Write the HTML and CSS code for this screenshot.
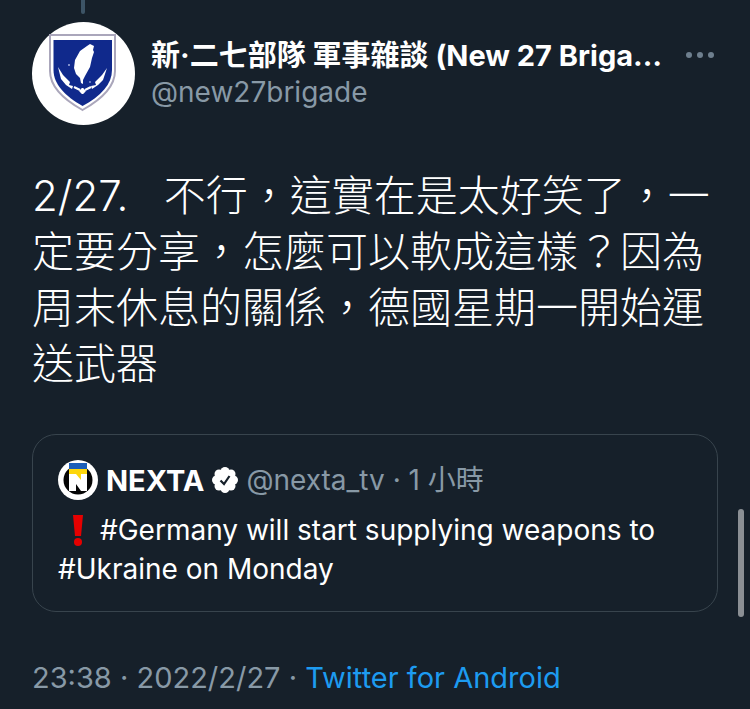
FILE: index.html
```html
<!DOCTYPE html>
<html lang="zh-Hant">
  <head>
    <meta charset="UTF-8" />
    <meta name="viewport" content="width=device-width, initial-scale=1.0" />
    <title>Tweet</title>

    <link rel="stylesheet" href="styles.css">
  </head>

  <body>
    <article class="tweet">
      <div class="thread-line"></div>

      <header class="tweet-header">
        <svg class="avatar" viewBox="0 0 103 103" role="img" aria-label="new27brigade">
          <circle cx="51.5" cy="51.5" r="51.5" fill="#fff" />
          <path d="M18 13H83V49C83 64 72 76 50.500 88C29 76 18 64 18 49Z" fill="#fff" stroke="#aaa6bb" stroke-width="2" />
          <path d="M21.500 18H80V48C80 62 69 74 50.500 84C33 74 21.500 62 21.500 48Z" fill="#10298c" />
          <path d="M55 24L58 22L62 24L61 28L62 30L60 36L58 45L53 54L51 58V62L49 61L48 56L44 52L42 46L43 38L48 29Z" fill="#fff" />
          <path d="M26 45L31 53L38 60L37 63L41 64L40 67L34 63L29 57ZM75 46L70 53L63 60L64 63L59 64L60 67L66 63L71 58Z" fill="#fff" />
          <path d="M42 65L48 68M59 65L53 68" stroke="#fff" stroke-width="2" />
          <circle cx="50.500" cy="69" r="2.500" fill="#fff" />
          <path d="M50.500 66V72M47.500 69H53.500" stroke="#fff" stroke-width="2" />
          <circle cx="37" cy="43" r="1" fill="#a5b1df" />
          <circle cx="58" cy="60" r="1" fill="#7f90ce" />
        </svg>

        <div class="author">
          <h1>新·二七部隊 軍事雜談 (New 27 Briga…</h1>
          <p>@new27brigade</p>
        </div>

        <button type="button" class="more" aria-label="更多">
          <svg viewBox="0 0 28 8">
            <circle cx="3" cy="4" r="3" />
            <circle cx="14" cy="4" r="3" />
            <circle cx="25" cy="4" r="3" />
          </svg>
        </button>
      </header>

      <p class="tweet-text">2/27.&nbsp;&nbsp; 不行，這實在是太好笑了，一定要分享，怎麼可以軟成這樣？因為周末休息的關係，德國星期一開始運送武器</p>

      <section class="quote">
        <div class="quote-header">
          <svg class="quote-avatar" viewBox="0 0 40 40" role="img" aria-label="NEXTA">
            <circle cx="20" cy="20" r="20" fill="#fff" />
            <circle cx="20" cy="20" r="14.500" fill="#050505" />
            <path d="M11 3H29V31H23L18 24V31H11Z" fill="#fff" />
            <path d="M11 3H29V9H11Z" fill="#1c5eb8" />
            <path d="M11 9H29V14H23V20L18 14H11Z" fill="#fdd60b" />
          </svg>
          <strong>NEXTA</strong>
          <svg class="verified" viewBox="0 0 26 26" role="img" aria-label="verified">
            <g fill="#fff">
              <circle cx="13" cy="13" r="10" />
              <circle cx="13" cy="4.500" r="4.500" />
              <circle cx="19" cy="7" r="4.500" />
              <circle cx="21.500" cy="13" r="4.500" />
              <circle cx="19" cy="19" r="4.500" />
              <circle cx="13" cy="21.500" r="4.500" />
              <circle cx="7" cy="19" r="4.500" />
              <circle cx="4.500" cy="13" r="4.500" />
              <circle cx="7" cy="7" r="4.500" />
            </g>
            <path d="M8.500 13.500L12 17L17.500 9" fill="none" stroke="#16202a" stroke-width="2.200" />
          </svg>
          <span class="quote-meta">@nexta_tv · 1 小時</span>
        </div>

        <p class="quote-text">
          <svg class="exclamation" viewBox="0 0 42 32" role="img" aria-label="!">
            <path d="M15 1H25L23 22H17Z" fill="#e60000" />
            <circle cx="20" cy="28" r="4" fill="#e60000" />
          </svg>#Germany will start supplying weapons to #Ukraine on Monday
        </p>
      </section>

      <footer class="tweet-footer">
        23:38 · 2022/2/27 · <a href="#">Twitter for Android</a>
      </footer>
    </article>

    <div class="scroll-thumb"></div>
  </body>
</html>
```

FILE: styles.css
```css
* {
  margin: 0;
  padding: 0;
  box-sizing: border-box;
}

body {
  background-color: #16202a;
  color: white;
  font-family: Inter, "Noto Sans CJK TC", sans-serif;
  font-size: 28px;
  overflow: hidden;
}

.tweet {
  padding: 0 32px;
}

.thread-line {
  width: 4px;
  height: 14px;
  margin-left: 49px;
  border-radius: 0 0 2px 2px;
  background-color: #3d5466;
}

.tweet-header {
  display: flex;
  gap: 16px;
  margin-top: 8px;
}

.avatar {
  flex: none;
  width: 103px;
  height: 103px;
}

.author {
  flex: 1;
  min-width: 0;
  padding-top: 16px;
}

.author h1 {
  font-size: 29px;
  line-height: 36px;
  white-space: nowrap;
}

.author p {
  color: #8899a6;
  line-height: 36px;
}

.more {
  align-self: flex-start;
  flex: none;
  margin: 29px 4px 0 0;
  border: none;
  background: none;
}

.more svg {
  display: block;
  width: 28px;
  height: 8px;
  fill: #6e7f8e;
}

.tweet-text {
  margin-top: 43px;
  font-size: 42px;
  font-weight: 300;
  line-height: 56px;
}

.quote {
  margin-top: 42px;
  padding: 25px 25px 22px;
  border: 1px solid #38444d;
  border-radius: 24px;
}

.quote-header {
  display: flex;
  align-items: center;
  gap: 8px;
}

.quote-header strong {
  font-size: 29px;
}

.quote-avatar {
  flex: none;
  width: 40px;
  height: 40px;
}

.verified {
  flex: none;
  width: 26px;
  height: 26px;
}

.quote-meta {
  color: #8899a6;
  line-height: 40px;
}

.quote-text {
  margin-top: 11px;
  line-height: 39px;
}

.exclamation {
  width: 42px;
  height: 32px;
  vertical-align: -6px;
}

.tweet-footer {
  margin-top: 48px;
  color: #8899a6;
  font-size: 29px;
  line-height: 36px;
}

.tweet-footer a {
  color: #1d9bf0;
  text-decoration: none;
}

.scroll-thumb {
  position: fixed;
  top: 509px;
  right: 6px;
  width: 6px;
  height: 108px;
  border-radius: 3px;
  background-color: #8b8f94;
}
```
